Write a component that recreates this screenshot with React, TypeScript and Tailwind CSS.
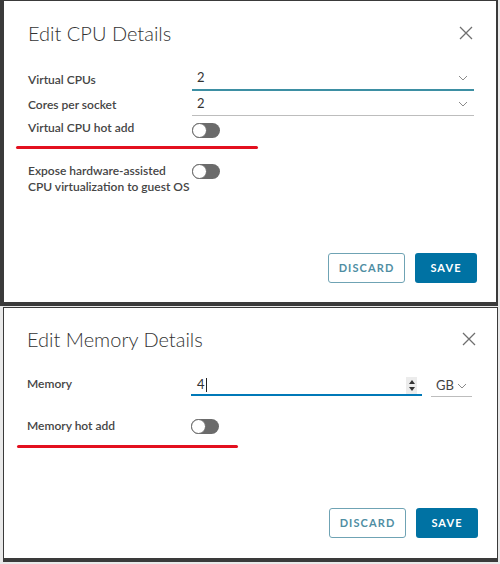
import React from 'react';

const font = { fontFamily: '"Lato", "Open Sans", "Liberation Sans", sans-serif' };

function Chevron() {
  return (
    <svg width="10" height="6" viewBox="0 0 10 6" className="shrink-0">
      <path d="M1 1 L5 5 L9 1" fill="none" stroke="#8a8a8a" strokeWidth="1" />
    </svg>
  );
}

function CloseIcon() {
  return (
    <svg width="14" height="14" viewBox="0 0 14 14">
      <path d="M1 1 L13 13 M13 1 L1 13" stroke="#6f6f6f" strokeWidth="1.3" fill="none" />
    </svg>
  );
}

function Toggle() {
  return (
    <div className="relative h-[15px] w-[28px] rounded-full bg-[#6b6b6b]">
      <div className="absolute left-0 top-0 h-[15px] w-[15px] rounded-full border border-[#6b6b6b] bg-white" />
    </div>
  );
}

function Buttons() {
  return (
    <div className="mt-auto flex justify-end gap-[10px]">
      <button className="h-[30px] w-[77px] rounded-[3px] border border-[#6fa3b4] bg-white text-[11px] font-bold tracking-[0.1em] text-[#4f8ea3]">
        DISCARD
      </button>
      <button className="h-[30px] w-[62px] rounded-[3px] bg-[#0072a3] text-[11px] font-bold tracking-[0.1em] text-white">
        SAVE
      </button>
    </div>
  );
}

function Header({ title }: { title: string }) {
  return (
    <div className="flex items-center justify-between">
      <h2 className="text-[20px] font-light leading-[28px] text-[#333]">{title}</h2>
      <CloseIcon />
    </div>
  );
}

export default function App() {
  return (
    <div className="h-[564px] w-[500px] bg-[#e9e9e9] text-[#454545]" style={font}>
      {/* CPU dialog */}
      <div className="flex h-[306px] w-[498px] flex-col border-b-4 border-l-4 border-r-2 border-t border-[#3a3a3a] bg-white pb-[19px] pl-[24px] pr-[19px] pt-[18px]">
        <div className="pr-[4px]">
          <Header title="Edit CPU Details" />
        </div>

        <div className="mt-[20px] grid grid-cols-[164px_282px] text-[12px] font-semibold">
          <div className="flex h-[24px] items-center pt-[2px]">Virtual CPUs</div>
          <div className="flex h-[24px] items-center justify-between border-b-2 border-[#3d8fa3] pl-[5px] pr-[6px] font-normal text-[#333]">
            <span className="text-[13px]">2</span>
            <Chevron />
          </div>

          <div className="flex h-[25px] items-center pt-[2px]">Cores per socket</div>
          <div className="flex h-[25px] items-center justify-between border-b border-[#bdbdbd] pl-[5px] pr-[6px] pt-[2px] font-normal text-[#333]">
            <span className="text-[13px]">2</span>
            <Chevron />
          </div>

          <div className="flex h-[22px] items-end pb-[1px]">Virtual CPU hot add</div>
          <div className="flex h-[22px] items-end">
            <Toggle />
          </div>
        </div>

        <div className="ml-[-12px] mt-[8px] h-[3px] w-[242px] rounded-full bg-[#e3101f]" />

        <div className="mt-[14px] grid grid-cols-[164px_282px] text-[12px] font-semibold">
          <div className="leading-[16px]">
            Expose hardware-assisted
            <br />
            CPU virtualization to guest OS
          </div>
          <div className="pt-[1px]">
            <Toggle />
          </div>
        </div>

        <Buttons />
      </div>

      {/* Memory dialog */}
      <div className="ml-[3px] mt-[1px] flex h-[255px] w-[495px] flex-col border border-b-4 border-[#3a3a3a] bg-white pb-[20px] pl-[23px] pr-[19px] pt-[17px]">
        <div className="pr-[2px]">
          <Header title="Edit Memory Details" />
        </div>

        <div className="mt-[22px] flex items-end text-[12px] font-semibold">
          <div className="w-[164px] pb-[3px]">Memory</div>
          <div className="flex h-[20px] w-[231px] items-center justify-between border-b-2 border-[#0079b8] pl-[6px] pr-[5px] font-normal text-[#333]">
            <span className="flex items-center text-[13px]">
              4<span className="ml-[1px] inline-block h-[14px] w-px bg-[#222]" />
            </span>
            <div className="mb-[-1px] flex h-[17px] w-[11px] flex-col items-center justify-center gap-[3px] bg-[#ececec]">
              <svg width="6" height="4" viewBox="0 0 6 4"><path d="M0 4 L3 0 L6 4 Z" fill="#333" /></svg>
              <svg width="6" height="4" viewBox="0 0 6 4"><path d="M0 0 L3 4 L6 0 Z" fill="#333" /></svg>
            </div>
          </div>
          <div className="mb-[-1px] ml-[9px] flex h-[21px] w-[41px] items-center justify-between border-b border-[#bdbdbd] pl-[5px] pr-[5px] font-normal text-[#444]">
            <span className="text-[13px]">GB</span>
            <Chevron />
          </div>
        </div>

        <div className="mt-[21px] flex items-center text-[12px] font-semibold">
          <div className="w-[164px]">Memory hot add</div>
          <Toggle />
        </div>

        <div className="ml-[-10px] mt-[10px] h-[3px] w-[221px] rounded-full bg-[#e3101f]" />

        <Buttons />
      </div>
    </div>
  );
}
